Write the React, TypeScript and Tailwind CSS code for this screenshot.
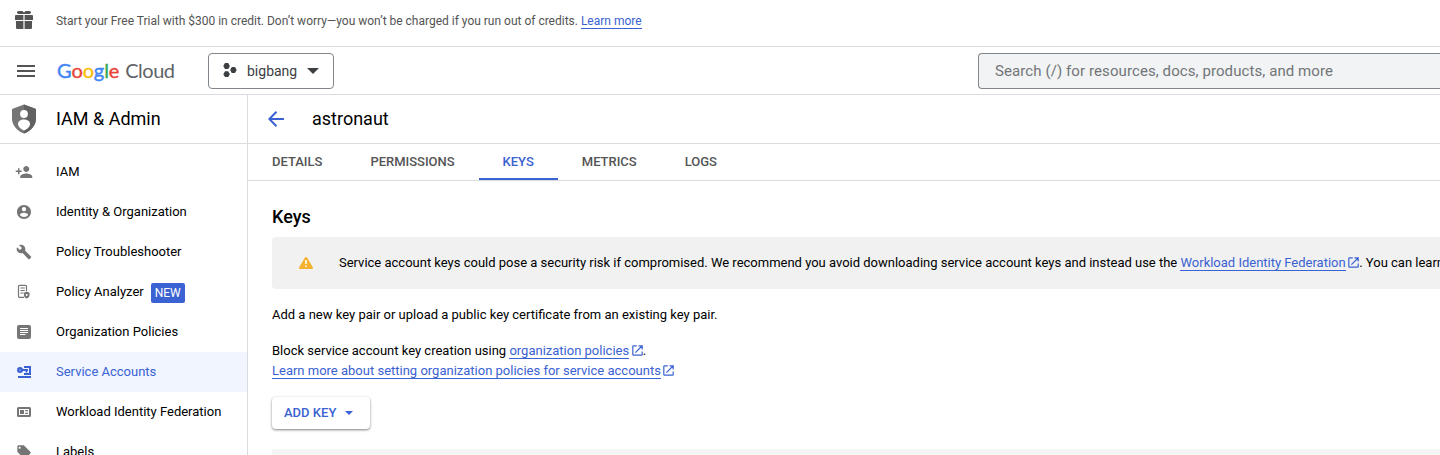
import type { ReactNode } from "react";

const LINK = "border-b border-[#3a62d2] text-[#3a62d2]";

function Glyph({
  d,
  box = "0 0 24 24",
  className = "h-4 w-4",
}: {
  d: string;
  box?: string;
  className?: string;
}) {
  return (
    <svg viewBox={box} fill="currentColor" className={className}>
      <path fillRule="evenodd" d={d} />
    </svg>
  );
}

const PATHS = {
  personAdd:
    "M15 12c2.21 0 4-1.79 4-4s-1.79-4-4-4-4 1.79-4 4 1.79 4 4 4zm-9-2V7H4v3H1v2h3v3h2v-3h3v-2H6zm9 4c-2.67 0-8 1.34-8 4v2h16v-2c0-2.66-5.33-4-8-4z",
  account:
    "M12 2C6.48 2 2 6.48 2 12s4.48 10 10 10 10-4.48 10-10S17.52 2 12 2zm0 3c1.66 0 3 1.34 3 3s-1.34 3-3 3-3-1.34-3-3 1.34-3 3-3zm0 14.2c-2.5 0-4.71-1.28-6-3.22.03-1.99 4-3.08 6-3.08 1.99 0 5.97 1.09 6 3.08-1.29 1.94-3.5 3.22-6 3.22z",
  wrench:
    "M22.7 19l-9.1-9.1c.9-2.3.4-5-1.5-6.9-2-2-5-2.4-7.4-1.3L9 6 6 9 1.6 4.7C.4 7.1.9 10.1 2.9 12.1c1.9 1.9 4.6 2.4 6.9 1.5l9.1 9.1c.4.4 1 .4 1.4 0l2.3-2.3c.5-.4.5-1.1.1-1.4z",
  tag: "M21.41 11.58l-9-9C12.05 2.22 11.55 2 11 2H4c-1.1 0-2 .9-2 2v7c0 .55.22 1.05.59 1.42l9 9c.36.36.86.58 1.41.58.55 0 1.05-.22 1.41-.59l7-7c.37-.36.59-.86.59-1.41 0-.55-.23-1.06-.59-1.42zM5.5 7C4.67 7 4 6.33 4 5.500S4.67 4 5.500 4 7 4.670 7 5.500 6.330 7 5.500 7z",
};

function GiftIcon() {
  return (
    <svg viewBox="0 0 18 18" className="h-[18px] w-[18px]" fill="#545454">
      <path d="M3 0h4.400L9 1.400 10.600 0H15l1.200 1.200-1.200 1.900H3L1.800 1.200z" />
      <path d="M1 4h7.400v5H0V5a1 1 0 0 1 1-1zM9.600 4H17a1 1 0 0 1 1 1v4H9.600z" />
      <path d="M1 10h7.400v8H2.200A1.200 1.200 0 0 1 1 16.800zM9.600 10H17v6.800a1.200 1.200 0 0 1-1.200 1.200H9.600z" />
    </svg>
  );
}

function ShieldIcon() {
  return (
    <svg viewBox="0 0 24 30" className="h-[30px] w-6">
      <path d="M12 .5 24 5v9.500c0 6.600-5 12.500-12 15C5 27 0 21.100 0 14.500V5z" fill="#757575" />
      <path d="M12 .5 24 5v9.500c0 6.600-5 12.500-12 15z" fill="#616161" />
      <circle cx="12" cy="10" r="3.900" fill="#fff" />
      <path d="M6 20c0-3 2.700-4.600 6-4.600s6 1.600 6 4.600c0 2.800-3 5.200-6 6.600-3-1.400-6-3.800-6-6.600z" fill="#fff" />
    </svg>
  );
}

function AnalyzerIcon() {
  return (
    <svg viewBox="0 0 16 16" className="h-4 w-4" fill="none" stroke="#757575">
      <path d="M8 13.300H3.500a1 1 0 0 1-1-1v-10a1 1 0 0 1 1-1h6a1 1 0 0 1 1 1V7" strokeWidth="1.200" />
      <path d="M4.500 4h4.300M4.500 6.500h4.300M4.500 9h3" />
      <path d="M10.700 7.600 13.500 8.700v2.200c0 1.700-1.200 2.900-2.800 3.600-1.600-.7-2.800-1.900-2.800-3.600V8.700z" fill="#757575" stroke="none" />
      <circle cx="10.700" cy="11" r="1" fill="#fff" stroke="none" />
    </svg>
  );
}

function PoliciesIcon() {
  return (
    <svg viewBox="0 0 14 14" className="h-[14px] w-[14px]">
      <rect width="14" height="14" rx="2" fill="#757575" />
      <path d="M3 3.500h8M3 5.500h8M3 7.500h8M3 9.500h5.500" stroke="#fff" />
    </svg>
  );
}

function ServiceIcon() {
  return (
    <svg viewBox="0 0 14 12" className="h-3 w-[14px]" fill="none" stroke="#3a62d2">
      <path d="M7 1h6v7H7" strokeWidth="2" />
      <circle cx="3" cy="4" r="2" strokeWidth="2" fill="#7f9be6" />
      <path d="M5 4h6M9.500 4v2.500" strokeWidth="1.800" />
      <path d="M1 11h13" strokeWidth="2" />
    </svg>
  );
}

function FederationIcon() {
  return (
    <svg viewBox="0 0 14 10" className="h-[10px] w-[14px]">
      <rect width="14" height="10" rx="1.500" fill="#757575" />
      <path d="M2 2h10v6H2z" fill="#fff" />
      <path d="M3 3h4v4H3zM8.200 3H11v1.300H8.200zM8.200 5.700H11V7H8.200z" fill="#757575" />
    </svg>
  );
}

function ExternalIcon() {
  return (
    <svg
      viewBox="0 0 11 11"
      className="ml-[2.500px] inline-block h-[11px] w-[11px] align-[-1px]"
      fill="none"
      stroke="#3a62d2"
      strokeWidth="1.200"
    >
      <path d="M4.800.8H1.600a.8.8 0 0 0-.8.8v7.800a.8.8 0 0 0 .8.8h7.800a.8.8 0 0 0 .8-.8V6.400M6.500.8h3.700v3.700M10 1 3.400 7.600" />
    </svg>
  );
}

function Logo() {
  return (
    <div className="flex w-[118px] items-baseline whitespace-nowrap pb-0.5 font-['Lato',sans-serif] text-[20px] leading-6">
      <span className="tracking-[-0.100px] [-webkit-text-stroke:0.400px]">
        <span className="text-[#4285f4]">G</span>
        <span className="text-[#ea4335]">o</span>
        <span className="text-[#fbbc04]">o</span>
        <span className="text-[#4285f4]">g</span>
        <span className="text-[#34a853]">l</span>
        <span className="text-[#ea4335]">e</span>
      </span>
      <span className="ml-[6px] tracking-[-0.500px] text-[#5f6368]">Cloud</span>
    </div>
  );
}

type Item = { label: string; icon: ReactNode; isNew?: boolean; active?: boolean };

const ITEMS: Item[] = [
  { label: "IAM", icon: <Glyph d={PATHS.personAdd} className="h-[18px] w-[18px]" /> },
  {
    label: "Identity & Organization",
    icon: <Glyph d={PATHS.account} box="2 2 20 20" className="h-[14px] w-[14px]" />,
  },
  { label: "Policy Troubleshooter", icon: <Glyph d={PATHS.wrench} /> },
  { label: "Policy Analyzer", icon: <AnalyzerIcon />, isNew: true },
  { label: "Organization Policies", icon: <PoliciesIcon /> },
  { label: "Service Accounts", icon: <ServiceIcon />, active: true },
  { label: "Workload Identity Federation", icon: <FederationIcon /> },
  { label: "Labels", icon: <Glyph d={PATHS.tag} /> },
];

const TABS = ["DETAILS", "PERMISSIONS", "KEYS", "METRICS", "LOGS"];

function Sidebar() {
  return (
    <aside className="flex w-[248px] shrink-0 flex-col border-r border-[#dadce0]">
      <div className="flex h-[49px] shrink-0 items-center border-b border-[#dadce0] pl-3">
        <ShieldIcon />
        <h2 className="ml-5 text-[18px]">IAM &amp; Admin</h2>
      </div>
      <nav className="flex flex-col pt-2">
        {ITEMS.map((item) => (
          <div
            key={item.label}
            className={`flex h-10 shrink-0 items-center ${item.active ? "bg-[#f0f5ff] text-[#3a62d2]" : ""}`}
          >
            <span className="ml-3 flex w-6 items-center justify-center text-[#757575]">{item.icon}</span>
            <span className="ml-5">{item.label}</span>
            {item.isNew && (
              <span className="ml-[7px] mt-0.5 flex h-5 w-[34px] items-center justify-center rounded-[2px] bg-[#3a62d2] text-[12px] text-white">
                NEW
              </span>
            )}
          </div>
        ))}
      </nav>
    </aside>
  );
}

function Main() {
  return (
    <main className="flex min-w-0 flex-1 flex-col overflow-hidden">
      <div className="flex h-[49px] shrink-0 items-center border-b border-[#dadce0] pl-5">
        <svg viewBox="0 0 16 16" className="h-4 w-4" fill="none" stroke="#3a62d2" strokeWidth="2">
          <path d="M16 8H1.500M8.500.8 1.300 8l7.200 7.200" />
        </svg>
        <h1 className="ml-7 text-[18px]">astronaut</h1>
      </div>
      <div className="flex h-[37px] shrink-0 border-b border-[#dadce0]">
        {TABS.map((tab) => (
          <div
            key={tab}
            className={`flex items-center border-b-2 px-6 pt-0.5 font-medium tracking-[-0.015px] ${
              tab === "KEYS" ? "border-[#3a62d2] text-[#3a62d2]" : "border-transparent text-[#545454]"
            }`}
          >
            {tab}
          </div>
        ))}
      </div>
      <div className="flex shrink-0 flex-col items-start pl-6 pt-6">
        <h2 className="text-[18px] font-medium leading-6">Keys</h2>
        <div className="mt-2 flex h-[52px] w-full items-center overflow-hidden whitespace-nowrap rounded-l bg-[#f1f1f1] pl-[27px]">
          <svg viewBox="0 0 14 12" className="h-3 w-[14px] shrink-0">
            <path d="M7 1.200 12.800 10.800H1.200z" fill="#f3b32f" stroke="#f3b32f" strokeWidth="2.400" strokeLinejoin="round" />
            <path d="M7 3v4M7 8.400v1.600" stroke="#fff" strokeWidth="1.500" />
          </svg>
          <p className="ml-[26px] tracking-[-0.005px]">
            Service account keys could pose a security risk if compromised. We recommend you avoid downloading service
            account keys and instead use the <a className={LINK}>Workload Identity Federation</a>
            <ExternalIcon />. You can learn more
          </p>
        </div>
        <p className="mt-4">Add a new key pair or upload a public key certificate from an existing key pair.</p>
        <p className="mt-4">
          Block service account key creation using <a className={LINK}>organization policies</a>
          <ExternalIcon />.
          <br />
          <a className={LINK}>Learn more about setting organization policies for service accounts</a>
          <ExternalIcon />
        </p>
        <button className="mt-4 flex h-8 w-[98px] items-center rounded bg-white pl-3 font-medium text-[#3a62d2] shadow-[0_1px_3px_rgba(0,0,0,0.300),0_1px_2px_rgba(0,0,0,0.240)]">
          ADD KEY
          <svg viewBox="0 0 8 4" className="ml-[9px] h-1 w-2" fill="currentColor">
            <path d="M0 0h8L4 4z" />
          </svg>
        </button>
        <div className="mt-5 h-10 w-full bg-[#f5f5f5]" />
      </div>
    </main>
  );
}

export default function App() {
  return (
    <div className="flex h-[455px] w-[1440px] flex-col overflow-hidden bg-white font-['Roboto',sans-serif] text-[13px] leading-5 text-black">
      <div className="flex h-[47px] shrink-0 items-center border-b border-[#dadce0] pb-1.5 pl-[15px]">
        <GiftIcon />
        <p className="ml-[23px] mt-0.5 text-[12px] tracking-[-0.006px] text-[#545454]">
          Start your Free Trial with $300 in credit. Don’t worry—you won’t be charged if you run out of credits.{" "}
          <a className={LINK}>Learn more</a>
        </p>
      </div>
      <header className="flex h-12 shrink-0 items-center border-b border-[#dadce0] pl-[17px]">
        <svg viewBox="0 0 18 12" className="h-3 w-[18px]" stroke="#545454" strokeWidth="2">
          <path d="M0 1h18M0 6h18M0 11h18" />
        </svg>
        <div className="ml-[22px]">
          <Logo />
        </div>
        <button className="ml-[33px] flex h-9 w-[126px] items-center rounded border border-[#80868b] pl-[14px] text-[14px] text-[#3c4043]">
          <svg viewBox="0 0 14 14" className="mb-0.5 h-[14px] w-[14px]" fill="#3c4043">
            <path d="M2 0h3.200L6.900 3 5.200 6H2L.3 3zM2 8.200h3.200l1.700 3-1.700 2.800H2L.3 11.200zM8.800 4H12l1.700 3L12 10H8.800L7.100 7z" />
          </svg>
          <span className="ml-[10px]">bigbang</span>
          <svg viewBox="0 0 12 6" className="ml-[10px] h-1.5 w-3" fill="currentColor">
            <path d="M0 0h12L6 6z" />
          </svg>
        </button>
        <div className="ml-auto flex h-9 w-[462px] items-center rounded-l border border-r-0 border-[#80868b] bg-[#f1f3f4] pl-4 text-[15px] tracking-[0.090px] text-[#717578]">
          Search (/) for resources, docs, products, and more
        </div>
      </header>
      <div className="flex min-h-0 flex-1">
        <Sidebar />
        <Main />
      </div>
    </div>
  );
}
